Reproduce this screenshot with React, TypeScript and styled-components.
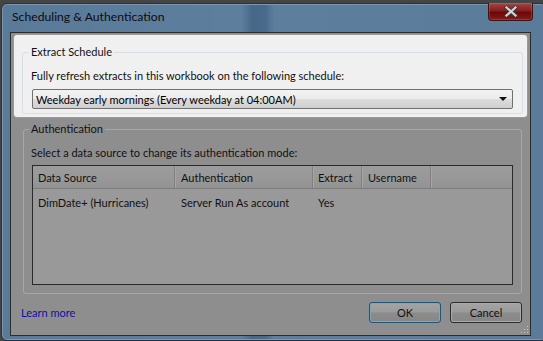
import React from "react";
import styled, { createGlobalStyle } from "styled-components";

const Global = createGlobalStyle`
  html, body { margin: 0; padding: 0; }
  body {
    width: 543px; height: 341px; overflow: hidden;
    background: #454545;
    font-family: Lato, "Open Sans", sans-serif;
    font-size: 11px;
    color: #111;
  }
`;

const Window = styled.div`
  margin: 3px 0 0 1px;
  width: 546px;
  height: 338px;
  box-sizing: border-box;
  border: 1px solid #26323e;
  border-radius: 6px;
  background: linear-gradient(90deg, #5a7a9a 0%, #5e7e9e 44%, #48688a 46%, #4a6a8c 48.5%, #5e7e9e 50%, #5b7b9b 100%);
  padding: 0 15px 4px 8px;
  box-shadow: inset 0 0 0 1px #7d97b0;
`;

const TitleBar = styled.div`
  height: 28px;
  display: flex;
  align-items: flex-start;
  position: relative;
`;

const Title = styled.div`
  margin: 5px 0 0 2px;
  font-size: 12.2px;
  color: #0c0c0c;
`;

const CloseButton = styled.div`
  position: absolute;
  left: 478px;
  top: -1px;
  width: 45px;
  height: 18px;
  box-sizing: border-box;
  border: 1px solid #3a1414;
  border-top: none;
  border-radius: 0 0 4px 4px;
  background: linear-gradient(180deg, #a04848 0%, #8a1e1e 45%, #6c0808 55%, #861a1a 100%);
  display: flex;
  align-items: center;
  justify-content: center;
  box-shadow: inset 0 0 0 1px rgba(255, 160, 160, 0.22);
`;

const Client = styled.div`
  height: 304px;
  box-sizing: border-box;
  border: 1px solid #2c2c2c;
  background: #8e8e8e;
  display: flex;
  flex-direction: column;
  position: relative;
`;

const Highlight = styled.div`
  margin: 3px 4px 0 4px;
  background: #f0f0f0;
  box-shadow: 0 0 1px 1px #fdfdfd;
  border-radius: 2px;
  padding: 8px 3px 2px 7px;
`;

const Group = styled.fieldset<{ $light?: boolean }>`
  margin: 0;
  border: 1px solid ${(p) => (p.$light ? "#d7dfe5" : "#a4a8ac")};
  border-radius: 3px;
  padding: 0 9px 0 8px;
  min-width: 0;
`;

const AuthGroup = styled(Group)`
  margin: 5px 8px 0 12px;
  padding: 0 8px 0 7px;
`;

const Legend = styled.legend`
  padding: 0 2px;
  margin-left: -2px;
  line-height: 16px;
  color: #111;
`;

const Caption = styled.div`
  line-height: 16px;
  margin-top: 8px;
`;

const Combo = styled.div`
  margin: 5px 0 4px 1px;
  height: 20px;
  box-sizing: border-box;
  border: 1px solid #707070;
  border-radius: 2px;
  background: linear-gradient(180deg, #f3f3f3 0%, #ebebeb 50%, #dddddd 51%, #cfcfcf 100%);
  display: flex;
  align-items: center;
  justify-content: space-between;
  padding: 0 5px 0 3px;
  color: #000;
`;

const Arrow = styled.div`
  width: 0;
  height: 0;
  border-left: 4px solid transparent;
  border-right: 4px solid transparent;
  border-top: 4px solid #111;
`;

const Table = styled.div`
  margin: 4px 0 8px 1px;
  height: 120px;
  box-sizing: border-box;
  border: 1px solid #2a2a2a;
  background: #999999;
  display: flex;
  flex-direction: column;
`;

const Row = styled.div<{ $head?: boolean }>`
  display: grid;
  grid-template-columns: 143px 138px 49px 69px 1fr;
  height: ${(p) => (p.$head ? "23px" : "26px")};
  box-sizing: border-box;
  ${(p) =>
    p.$head
      ? `background: linear-gradient(180deg, #9c9c9c 0%, #989898 60%, #929292 100%); border-bottom: 1px solid #7c7c7c;`
      : ``}
`;

const Cell = styled.div<{ $head?: boolean; $pad?: number }>`
  display: flex;
  align-items: center;
  padding-left: ${(p) => p.$pad ?? 5}px;
  color: #111;
  white-space: nowrap;
  ${(p) =>
    p.$head
      ? `border-right: 1px solid #a6a6a6; box-shadow: inset -2px 0 0 -1px #808080;`
      : ``}
`;

const Footer = styled.div`
  display: flex;
  align-items: flex-start;
  flex: 1;
  padding: 8px 8px 0 10px;
`;

const Link = styled.a`
  color: #0f0fa8;
  text-decoration: none;
  flex: 1;
  line-height: 21px;
`;

const Button = styled.div<{ $default?: boolean }>`
  width: 72px;
  height: 21px;
  box-sizing: border-box;
  border: 1px solid ${(p) => (p.$default ? "#1d5677" : "#2c2c2c")};
  border-radius: 3px;
  background: linear-gradient(180deg, #a4a4a4 0%, #9a9a9a 48%, #8c8c8c 52%, #878787 100%);
  box-shadow: inset 0 0 0 1px ${(p) => (p.$default ? "#7ea7bf" : "#aaaaaa")};
  display: flex;
  align-items: center;
  justify-content: center;
  color: #111;
  margin-left: ${(p) => (p.$default ? "0" : "9px")};
`;

const Grip = styled.svg`
  position: absolute;
  right: 1px;
  bottom: 1px;
`;

const cols = ["Data Source", "Authentication", "Extract", "Username"];
const pads = [5, 5, 4, 5];
const row = ["DimDate+ (Hurricanes)", "Server Run As account", "Yes", ""];

export default function App() {
  return (
    <>
      <Global />
      <Window>
        <TitleBar>
          <Title>Scheduling &amp; Authentication</Title>
          <CloseButton>
            <svg width="14" height="11" viewBox="0 0 14 11">
              <path
                d="M2.5 1.5 L11.5 9.5 M11.5 1.5 L2.5 9.5"
                stroke="#3a3a3a"
                strokeWidth="4"
                strokeLinecap="square"
              />
              <path
                d="M2.5 1.5 L11.5 9.5 M11.5 1.5 L2.5 9.5"
                stroke="#d4d4d4"
                strokeWidth="2.2"
                strokeLinecap="square"
              />
            </svg>
          </CloseButton>
        </TitleBar>
        <Client>
          <Highlight>
            <Group $light>
              <Legend>Extract Schedule</Legend>
              <Caption>Fully refresh extracts in this workbook on the following schedule:</Caption>
              <Combo>
                <span>Weekday early mornings (Every weekday at 04:00AM)</span>
                <Arrow />
              </Combo>
            </Group>
          </Highlight>
          <AuthGroup>
            <Legend>Authentication</Legend>
            <Caption>Select a data source to change its authentication mode:</Caption>
            <Table>
              <Row $head>
                {cols.map((c, i) => (
                  <Cell $head key={c} $pad={pads[i]}>
                    {c}
                  </Cell>
                ))}
                <Cell />
              </Row>
              <Row>
                {row.map((c, i) => (
                  <Cell key={i} $pad={pads[i]}>
                    {c}
                  </Cell>
                ))}
                <Cell />
              </Row>
            </Table>
          </AuthGroup>
          <Footer>
            <Link>Learn more</Link>
            <Button $default>OK</Button>
            <Button>Cancel</Button>
          </Footer>
          <Grip width="8" height="8" viewBox="0 0 8 8">
            <rect x="6" y="0" width="1" height="1" fill="#c8c8c8" />
            <rect x="3" y="3" width="1" height="1" fill="#c8c8c8" />
            <rect x="6" y="3" width="1" height="1" fill="#c8c8c8" />
            <rect x="0" y="6" width="1" height="1" fill="#c8c8c8" />
            <rect x="3" y="6" width="1" height="1" fill="#c8c8c8" />
            <rect x="6" y="6" width="1" height="1" fill="#c8c8c8" />
          </Grip>
        </Client>
      </Window>
    </>
  );
}
